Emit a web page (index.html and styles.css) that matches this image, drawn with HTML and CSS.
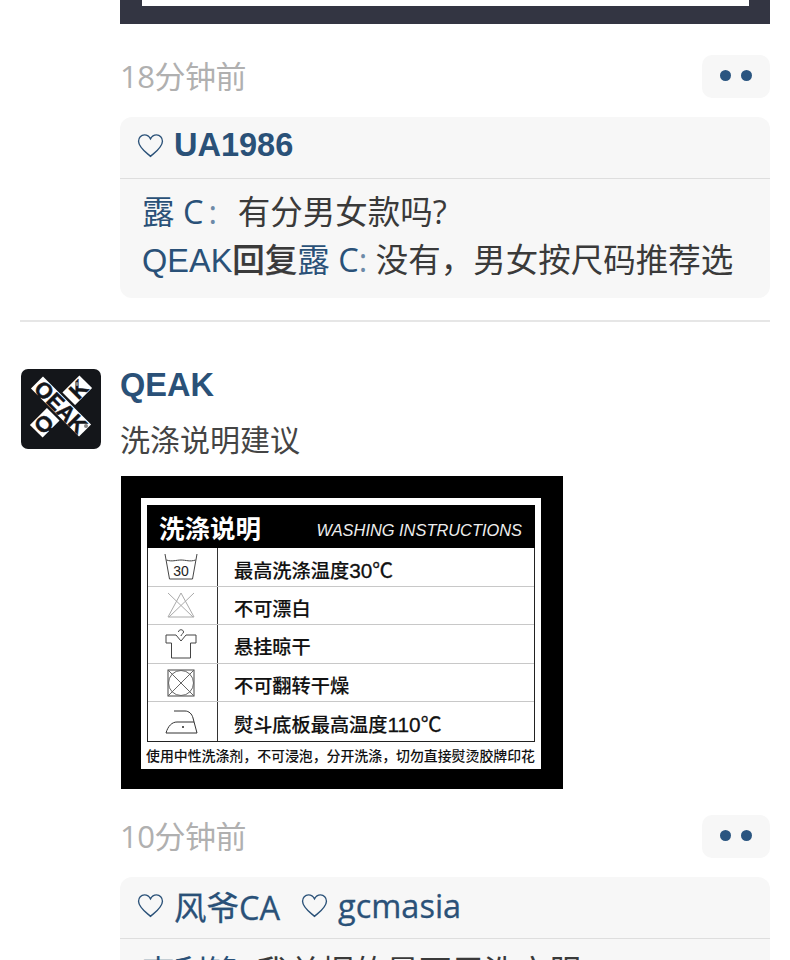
FILE: index.html
```html
<!DOCTYPE html>
<html lang="zh">
<head>
    <meta charset="UTF-8">
    <meta name="viewport" content="width=device-width, initial-scale=1.0">
    <title>QEAK</title>
    <link rel="stylesheet" href="styles.css">
</head>
<body>
    <div class="post post-prev">
        <div class="post-main">
            <div class="prev-photo"><div class="prev-photo-inner"></div></div>
            <div class="meta">
                <span class="time">18分钟前</span>
                <button class="more"><i></i><i></i></button>
            </div>
            <div class="feedback">
                <div class="likes likes-bold">
                    <span class="like"><svg class="heart" viewBox="0 0 26 24"><path d="M13 22.5C9 18.8 1.5 13.8 1.5 7.8 1.5 4.3 4 1.8 7.2 1.8c2.5 0 4.6 1.4 5.8 3.8 1.2-2.4 3.3-3.8 5.8-3.8 3.2 0 5.7 2.5 5.7 6 0 6-7.5 11-11.5 14.7z"/></svg><a>UA1986</a></span>
                </div>
                <div class="comments">
                    <p><a>露 C</a><a class="colon colon-wide">:</a>&nbsp; 有分男女款吗?</p>
                    <p><a class="latin">QEAK</a><b>回复</b><a>露 C</a><a class="colon">:</a> 没有，男女按尺码推荐选</p>
                </div>
            </div>
        </div>
    </div>

    <div class="post">
        <div class="avatar">
            <svg viewBox="0 0 80 80">
                <g transform="rotate(45 40 37.5)">
                    <rect x="31" y="2.5" width="18" height="70" fill="#fff"/>
                    <text class="logo-text" transform="translate(40 13) rotate(-90)" y="8" text-anchor="middle">K</text>
                    <text class="logo-text" transform="translate(40 62) rotate(-90)" y="8" text-anchor="middle">Q</text>
                    <rect x="5" y="26.5" width="70" height="22" fill="#14161a"/>
                    <rect x="6" y="29" width="68" height="17" fill="#fff"/>
                    <text class="logo-text" x="40" y="45.5" text-anchor="middle">QEAK</text>
                </g>
                <circle cx="56" cy="15" r="2" fill="#888"/>
                <circle cx="65" cy="57" r="2" fill="#888"/>
            </svg>
        </div>
        <div class="post-main">
            <div class="author">QEAK</div>
            <div class="post-text">洗涤说明建议</div>
            <div class="wash-photo">
                <div class="wash-card">
                    <div class="wash-table">
                        <div class="wash-head">
                            <span class="wash-title">洗涤说明</span>
                            <span class="wash-en">WASHING INSTRUCTIONS</span>
                        </div>
                        <div class="wash-row">
                            <div class="wash-icon">
                                <svg viewBox="0 0 36 30"><path d="M2 2 6.5 27H29.5L34 2M3.5 8C9 10 13 8 18 8S27 10 32.5 8" fill="none" stroke="#444"/><text class="icon-num" x="18" y="24" text-anchor="middle">30</text></svg>
                            </div>
                            <div class="wash-label">最高洗涤温度<span class="num">30℃</span></div>
                        </div>
                        <div class="wash-row">
                            <div class="wash-icon">
                                <svg viewBox="0 0 36 30"><path d="M18 3 5 27H31ZM5 3 30 27M31 3 6 27" fill="none" stroke="#aaa"/></svg>
                            </div>
                            <div class="wash-label">不可漂白</div>
                        </div>
                        <div class="wash-row">
                            <div class="wash-icon">
                                <svg viewBox="0 0 36 30"><path d="M13 6H3V14H8.5V29H27.5V14H33V6H23L18 12ZM15.5 3C15.5 0 20.5 0 20.5 3 20.5 5 18 5 18 7" fill="none" stroke="#444"/></svg>
                            </div>
                            <div class="wash-label">悬挂晾干</div>
                        </div>
                        <div class="wash-row">
                            <div class="wash-icon">
                                <svg viewBox="0 0 36 30"><rect x="5" y="2" width="26" height="26" fill="none" stroke="#444"/><circle cx="18" cy="15" r="12.5" fill="none" stroke="#666"/><path d="M5 2 31 28M31 2 5 28" stroke="#666"/></svg>
                            </div>
                            <div class="wash-label">不可翻转干燥</div>
                        </div>
                        <div class="wash-row wash-row-last">
                            <div class="wash-icon">
                                <svg viewBox="0 0 36 30"><path d="M11 4H22C26 4 29 7 30 11L34 26H3C5 19 9 15 14 15H31" fill="none" stroke="#333"/><circle cx="20" cy="20" r="1" fill="#222"/></svg>
                            </div>
                            <div class="wash-label">熨斗底板最高温度<span class="num">110℃</span></div>
                        </div>
                    </div>
                    <div class="wash-note">使用中性洗涤剂，不可浸泡，分开洗涤，切勿直接熨烫胶牌印花</div>
                </div>
            </div>
            <div class="meta meta-after-photo">
                <span class="time">10分钟前</span>
                <button class="more"><i></i><i></i></button>
            </div>
            <div class="feedback">
                <div class="likes">
                    <span class="like"><svg class="heart" viewBox="0 0 26 24"><path d="M13 22.5C9 18.8 1.5 13.8 1.5 7.8 1.5 4.3 4 1.8 7.2 1.8c2.5 0 4.6 1.4 5.8 3.8 1.2-2.4 3.3-3.8 5.8-3.8 3.2 0 5.7 2.5 5.7 6 0 6-7.5 11-11.5 14.7z"/></svg><a>风爷CA</a></span>
                    <span class="like"><svg class="heart" viewBox="0 0 26 24"><path d="M13 22.5C9 18.8 1.5 13.8 1.5 7.8 1.5 4.3 4 1.8 7.2 1.8c2.5 0 4.6 1.4 5.8 3.8 1.2-2.4 3.3-3.8 5.8-3.8 3.2 0 5.7 2.5 5.7 6 0 6-7.5 11-11.5 14.7z"/></svg><a>gcmasia</a></span>
                </div>
                <div class="comments">
                    <p><a>李利锋</a><a class="colon">:</a> 我单据的是两周洗衣服</p>
                </div>
            </div>
        </div>
    </div>
</body>
</html>
```

FILE: styles.css
```css
html, body {
    height: 960px;
    overflow: hidden;
}

body {
    margin: 0;
    background-color: #fff;
    color: #3a3a3a;
    font-family: "Open Sans", "Noto Sans CJK SC", sans-serif;
}

a {
    color: #2a5178;
}

.post {
    display: flex;
    margin: 0 20px;
    padding-top: 47px;
}

.post-prev {
    padding-top: 0;
    padding-left: 100px;
    padding-bottom: 22px;
    border-bottom: 2px solid #e6e6e6;
}

.post-main {
    flex: 1;
    min-width: 0;
}

.prev-photo {
    height: 24px;
    background-color: #333542;
    padding: 0 21px 18px 22px;
    box-sizing: border-box;
}

.prev-photo-inner {
    height: 6px;
    background-color: #fff;
}

.meta {
    display: flex;
    justify-content: space-between;
    align-items: center;
    height: 43px;
    margin-top: 31px;
}

.meta-after-photo {
    margin-top: 26px;
}

.time {
    margin-bottom: 4px;
    font-size: 31px;
    color: #b0b0b0;
    letter-spacing: -0.5px;
}

.more {
    display: flex;
    justify-content: center;
    align-items: center;
    gap: 10px;
    width: 68px;
    height: 43px;
    padding: 0 0 2px;
    border: none;
    border-radius: 10px;
    background-color: #f7f7f7;
}

.more i {
    width: 11px;
    height: 11px;
    border-radius: 50%;
    background-color: #2a5580;
}

.feedback {
    margin-top: 19px;
    background-color: #f7f7f7;
    border-radius: 12px;
    padding-bottom: 13px;
}

.likes {
    display: flex;
    align-items: center;
    gap: 21px;
    height: 62px;
    box-sizing: border-box;
    padding: 0 0 4px 17px;
    border-bottom: 1px solid #dedede;
    font-size: 32.5px;
    -webkit-text-stroke: 0.3px #2a5178;
}

.like {
    display: flex;
    align-items: center;
    gap: 10px;
}

.likes-bold {
    font-family: "Liberation Sans", sans-serif;
    font-weight: bold;
    -webkit-text-stroke: 0;
}

.heart {
    width: 27px;
    height: 25px;
    fill: none;
    stroke: #2a5178;
    stroke-width: 1.3;
}

.comments {
    padding: 9px 22px 0;
    font-size: 32.5px;
    line-height: 48px;
    white-space: nowrap;
}

.comments p {
    margin: 0;
}

.comments b {
    font-weight: 500;
    -webkit-text-stroke: 0.2px #3a3a3a;
}

.latin {
    font-family: "Liberation Sans", sans-serif;
}

.colon {
    color: #6d8aa8;
}

.colon-wide {
    margin: 0 4px 0 5px;
}

.avatar {
    width: 80px;
    height: 80px;
    margin-right: 19px;
    margin-left: 1px;
    flex-shrink: 0;
    background-color: #14161a;
    border-radius: 7px;
    overflow: hidden;
}

.avatar svg {
    display: block;
}

.logo-text {
    font-family: "Liberation Sans", sans-serif;
    font-weight: bold;
    font-size: 22px;
    fill: #14161a;
    stroke: #14161a;
    stroke-width: 0.5;
}

.author {
    font-family: "Liberation Sans", sans-serif;
    font-weight: bold;
    font-size: 32.5px;
    line-height: 32px;
    color: #2a5178;
}

.post-text {
    margin-top: 17px;
    font-size: 30px;
    line-height: 44px;
    color: #444;
}

.wash-photo {
    width: 442px;
    height: 313px;
    margin-top: 14px;
    margin-left: 1px;
    padding: 22px 22px 20px 20px;
    box-sizing: border-box;
    background-color: #000;
}

.wash-card {
    height: 271px;
    padding: 7px 6px 0;
    box-sizing: border-box;
    background-color: #fff;
}

.wash-table {
    border: 1px solid #222;
    border-top: none;
    color: #111;
}

.wash-head {
    display: flex;
    justify-content: space-between;
    align-items: center;
    height: 43px;
    margin: 0 -1px;
    padding: 0 13px 0 12px;
    background-color: #000;
    color: #fff;
}

.wash-title {
    font-family: "Noto Sans CJK SC", sans-serif;
    font-weight: bold;
    font-size: 25.5px;
    line-height: 43px;
}

.wash-en {
    font-family: "Liberation Sans", sans-serif;
    font-style: italic;
    font-size: 16.4px;
    margin-top: 8px;
    color: #eee;
}

.wash-row {
    display: flex;
    height: 38.6px;
    border-bottom: 1px solid #c8c8c8;
    box-sizing: border-box;
}

.wash-row-last {
    border-bottom: none;
}

.wash-icon {
    display: flex;
    justify-content: center;
    align-items: center;
    width: 70px;
    padding-right: 3px;
    box-sizing: border-box;
    border-right: 1px solid #333;
}

.wash-icon svg {
    width: 36px;
    height: 30px;
}

.icon-num {
    font-family: "Liberation Sans", sans-serif;
    font-size: 14px;
    fill: #222;
}

.wash-label {
    padding: 4px 0 0 16px;
    font-family: "Liberation Sans", "Noto Sans CJK SC", sans-serif;
    font-weight: 500;
    font-size: 19.2px;
    line-height: 37px;
    white-space: nowrap;
    -webkit-text-stroke: 0.15px #111;
}

.num {
    font-size: 20.8px;
    font-weight: normal;
    -webkit-text-stroke: 0.3px #111;
}

.wash-note {
    margin-left: -1px;
    font-family: "Noto Sans CJK SC", sans-serif;
    font-weight: 500;
    font-size: 13.9px;
    line-height: 26px;
    white-space: nowrap;
    color: #111;
}
```
